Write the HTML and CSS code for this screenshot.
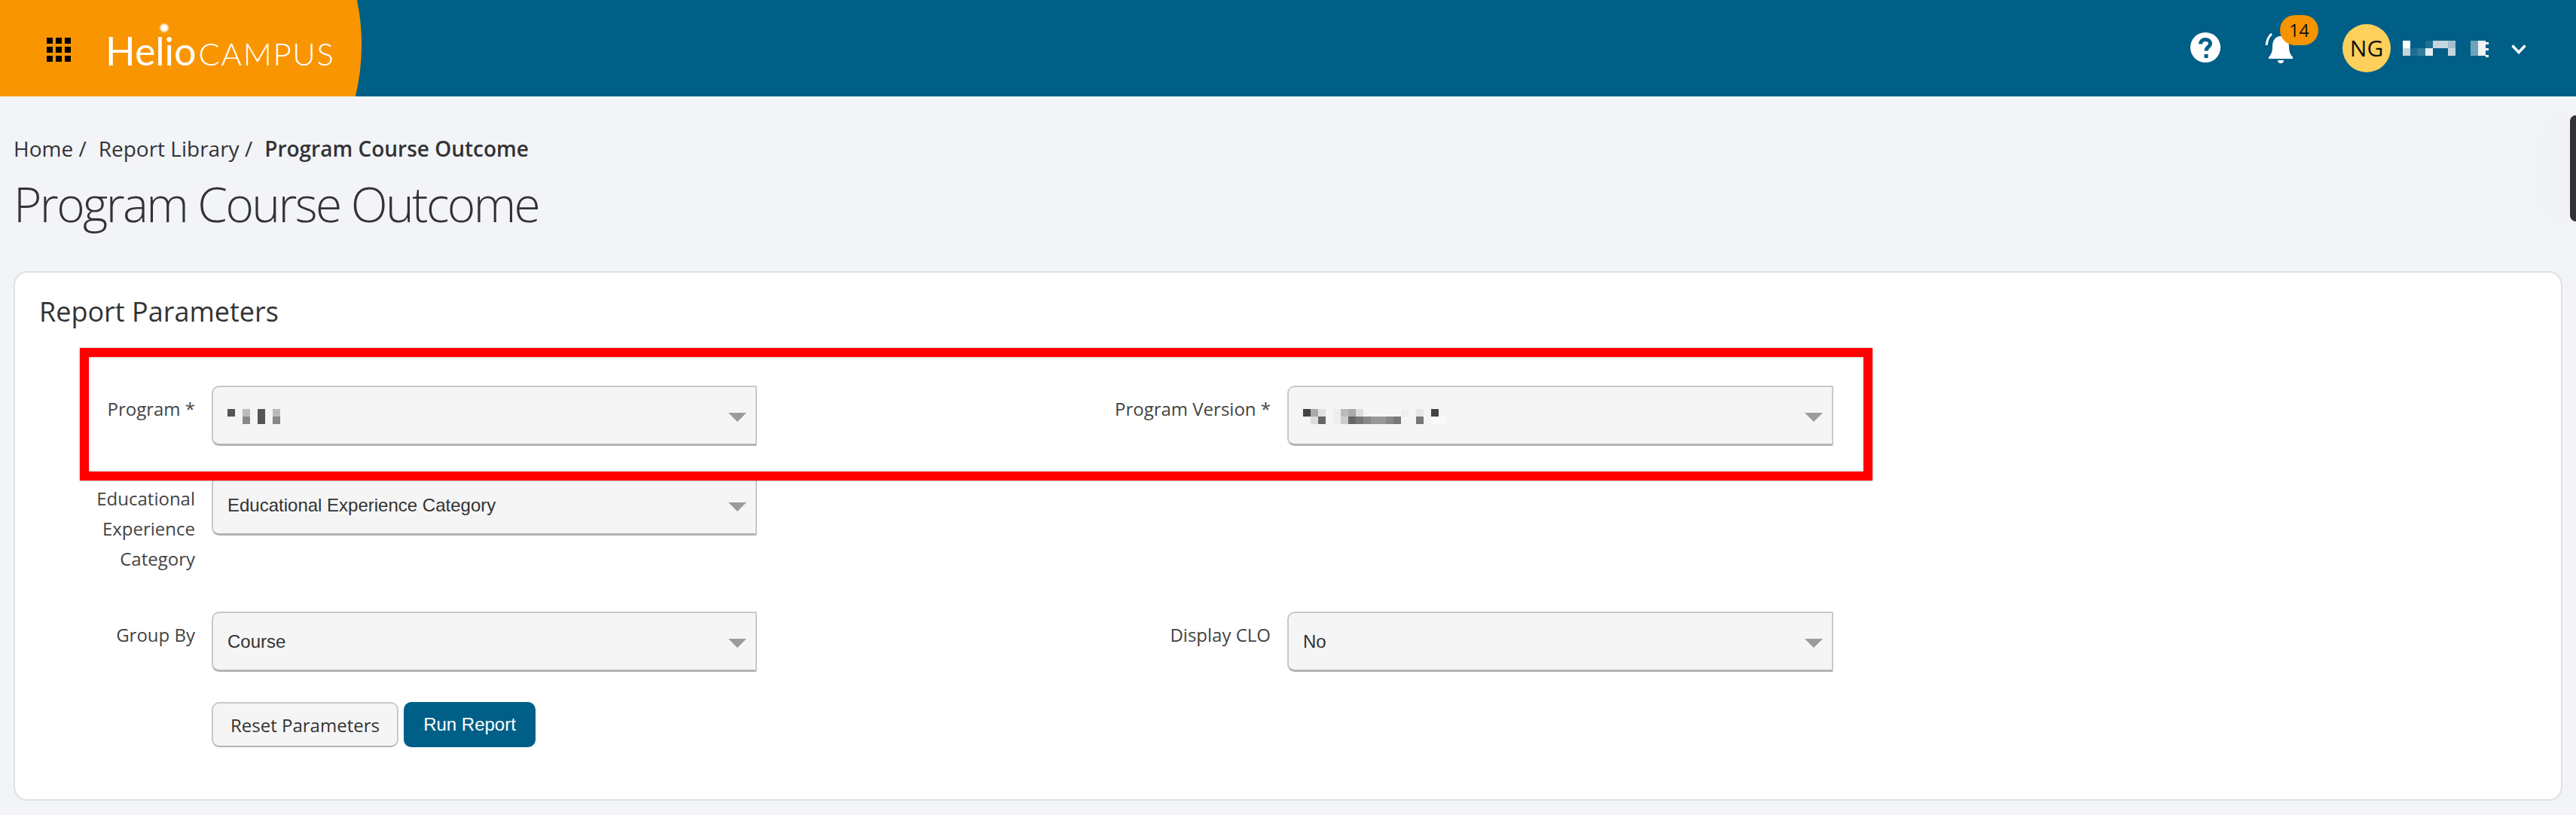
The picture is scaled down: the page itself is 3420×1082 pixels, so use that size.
FILE: index.html
```html
<!DOCTYPE html>
<html lang="en">
<head>
<meta charset="utf-8">
<title>Program Course Outcome</title>
<link rel="stylesheet" href="styles.css">
</head>
<body>
<header class="topbar">
  <div class="brand">
    <svg class="apps" width="32" height="32" viewBox="0 0 32 32" fill="#000"><rect x="0" y="0" width="8" height="8"/><rect x="12" y="0" width="8" height="8"/><rect x="24" y="0" width="8" height="8"/><rect x="0" y="12" width="8" height="8"/><rect x="12" y="12" width="8" height="8"/><rect x="24" y="12" width="8" height="8"/><rect x="0" y="24" width="8" height="8"/><rect x="12" y="24" width="8" height="8"/><rect x="24" y="24" width="8" height="8"/></svg>
    <div class="logo"><span class="logo-helio">Helio</span><span class="logo-campus">CAMPUS</span><i class="logo-star"></i></div>
  </div>
  <div class="tools">
    <svg class="help" width="40" height="40" viewBox="0 0 40 40"><circle cx="20" cy="20" r="20" fill="#fff"/><path d="M13.5 15.5C13.5 11.5 16.5 9.5 20 9.5C23.5 9.5 26.5 11.5 26.5 15C26.5 19 21 19.5 21 24.5" fill="none" stroke="#005f87" stroke-width="5"/><rect x="18.5" y="29" width="5" height="5" fill="#005f87"/></svg>
    <div class="bell-wrap">
      <svg class="bell" width="44" height="44" viewBox="0 0 44 44"><path d="M22 6C14 6 11 13 11 20C11 27 9 31 6 34V36H38V34C35 31 33 27 33 20C33 13 30 6 22 6Z" fill="#fff"/><path d="M18 38H26C26 41 24 42 22 42C20 42 18 41 18 38Z" fill="#fff"/><path d="M10 3C6 6 4 10 3 18M34 3C38 6 40 10 41 18" fill="none" stroke="#fff" stroke-width="3"/></svg>
      <span class="badge">14</span>
    </div>
    <div class="avatar">NG</div>
    <svg class="name-pixels" width="116" height="24" viewBox="0 0 116 24" shape-rendering="crispEdges">
      <rect x="0" y="0" width="10" height="10" fill="#fff"/><rect x="0" y="10" width="10" height="10" fill="#c5d5df"/>
      <rect x="10" y="10" width="10" height="10" fill="#1d6f93"/><rect x="20" y="10" width="10" height="10" fill="#327d9e"/>
      <rect x="30" y="0" width="10" height="10" fill="#1d6f93"/><rect x="30" y="10" width="10" height="10" fill="#e4ecf1"/>
      <rect x="40" y="0" width="20" height="10" fill="#c5d5df"/>
      <rect x="60" y="0" width="10" height="10" fill="#a3bfcf"/><rect x="60" y="10" width="10" height="10" fill="#c5d5df"/>
      <rect x="90" y="0" width="10" height="20" fill="#6fa3ba"/><rect x="100" y="0" width="10" height="20" fill="#eef3f6"/>
      <rect x="110" y="2" width="4" height="3" fill="#fff"/><rect x="110" y="10" width="4" height="3" fill="#fff"/><rect x="110" y="19" width="4" height="3" fill="#fff"/>
    </svg>
    <svg class="chevron" width="20" height="13" viewBox="0 0 20 13"><path d="M1.5 1.5L10 10.5L18.5 1.5" fill="none" stroke="#fff" stroke-width="3.5"/></svg>
  </div>
</header>

<main class="page">
  <nav class="crumbs">
    <span>Home /</span>
    <span>Report Library /</span>
    <strong>Program Course Outcome</strong>
  </nav>
  <h1 class="title">Program Course Outcome</h1>

  <section class="card">
    <h2 class="card-title">Report Parameters</h2>
    <form class="form">
      <label class="label">Program *</label>
      <div class="select">
        <svg class="value-pixels" width="70" height="20" viewBox="0 0 70 20" shape-rendering="crispEdges">
          <rect x="0" y="0" width="10" height="10" fill="#555"/>
          <rect x="20" y="0" width="10" height="10" fill="#bbb"/><rect x="20" y="10" width="10" height="10" fill="#888"/>
          <rect x="40" y="0" width="10" height="20" fill="#555"/>
          <rect x="60" y="0" width="10" height="10" fill="#bbb"/><rect x="60" y="10" width="10" height="10" fill="#888"/>
        </svg>
        <i class="arrow"></i>
      </div>
      <label class="label">Program Version *</label>
      <div class="select">
        <svg class="value-pixels" width="200" height="20" viewBox="0 0 200 20" shape-rendering="crispEdges">
          <rect x="0" y="0" width="10" height="10" fill="#444"/><rect x="10" y="0" width="10" height="10" fill="#aaa"/><rect x="20" y="0" width="10" height="10" fill="#e0e0e0"/>
          <rect x="40" y="0" width="10" height="10" fill="#eee"/><rect x="50" y="0" width="10" height="10" fill="#bbb"/><rect x="60" y="0" width="10" height="10" fill="#aaa"/><rect x="70" y="0" width="10" height="10" fill="#ddd"/>
          <rect x="130" y="0" width="10" height="10" fill="#eee"/><rect x="150" y="0" width="10" height="10" fill="#e5e5e5"/><rect x="170" y="0" width="10" height="10" fill="#444"/>
          <rect x="10" y="10" width="10" height="10" fill="#ddd"/><rect x="20" y="10" width="10" height="10" fill="#666"/>
          <rect x="40" y="10" width="10" height="10" fill="#eee"/><rect x="50" y="10" width="10" height="10" fill="#ccc"/><rect x="60" y="10" width="10" height="10" fill="#666"/><rect x="70" y="10" width="10" height="10" fill="#777"/><rect x="80" y="10" width="10" height="10" fill="#888"/><rect x="90" y="10" width="20" height="10" fill="#999"/><rect x="110" y="10" width="10" height="10" fill="#888"/><rect x="120" y="10" width="10" height="10" fill="#777"/>
          <rect x="150" y="10" width="10" height="10" fill="#777"/><rect x="170" y="10" width="20" height="10" fill="#fafafa"/>
        </svg>
        <i class="arrow"></i>
      </div>

      <label class="label">Educational Experience Category</label>
      <div class="select select-top"><span>Educational Experience Category</span><i class="arrow"></i></div>
      <div class="filler"></div>

      <label class="label">Group By</label>
      <div class="select"><span>Course</span><i class="arrow"></i></div>
      <label class="label">Display CLO</label>
      <div class="select"><span>No</span><i class="arrow"></i></div>

      <div class="actions">
        <button type="button" class="btn btn-reset">Reset Parameters</button>
        <button type="button" class="btn btn-run">Run Report</button>
      </div>
    </form>
    <div class="highlight"></div>
  </section>
</main>
<div class="side-tab"></div>
</body>
</html>
```

FILE: styles.css
```css
* { box-sizing: border-box; }
html, body { margin: 0; height: 100%; }
body {
  background: #f2f4f8;
  color: #333;
  font-family: "Open Sans", sans-serif;
  overflow: hidden;
  position: relative;
}

/* top bar */
.topbar {
  height: 128px;
  background: #005f87;
  display: flex;
  justify-content: space-between;
  align-items: center;
}
.brand {
  width: 490px;
  height: 128px;
  background: #f99500;
  clip-path: path("M0 0H474Q487 64 472 128H0Z");
  display: flex;
  align-items: center;
  padding-left: 62px;
  gap: 46px;
}
.apps { flex: none; margin-top: 4px; }
.logo {
  position: relative;
  display: flex;
  align-items: baseline;
  color: #fff;
  font-family: Lato, sans-serif;
  line-height: 1;
  margin-top: 5px;
}
.logo-helio { font-size: 52px; font-weight: 400; letter-spacing: 0; }
.logo-campus { font-size: 42px; font-weight: 300; margin-left: 3px; letter-spacing: 1.6px; }
.logo-star {
  position: absolute;
  left: 71px;
  top: -11px;
  width: 14px;
  height: 14px;
  border-radius: 50%;
  background: radial-gradient(circle, #fff 0 35%, rgba(255,255,255,.45) 55%, rgba(255,255,255,0) 72%);
}
.tools {
  display: flex;
  align-items: center;
  padding-right: 66px;
}
.help { margin-top: -2px; }
.bell-wrap { position: relative; margin-left: 58px; width: 44px; height: 44px; }
.badge {
  position: absolute;
  left: 21px;
  top: -22px;
  width: 51px;
  height: 40px;
  border-radius: 20px;
  background: #f59300;
  color: #111;
  font-size: 23px;
  line-height: 40px;
  text-align: center;
}
.avatar {
  width: 64px;
  height: 64px;
  border-radius: 50%;
  background: #ffd05b;
  color: #111;
  font-size: 30px;
  line-height: 64px;
  text-align: center;
  margin-left: 60px;
}
.name-pixels { margin-left: 16px; margin-top: 4px; }
.chevron { margin-left: 28px; margin-top: 2px; }

/* page */
.page { padding: 49px 18px 0; }
.crumbs {
  display: flex;
  gap: 16px;
  font-size: 28px;
  line-height: 40px;
  color: #333;
}
.crumbs strong { font-weight: 600; }
.title {
  margin: 14px 0 0;
  font-size: 64px;
  line-height: 80px;
  font-weight: 300;
  color: #333;
  letter-spacing: -2.6px;
}
.card {
  position: relative;
  margin-top: 49px;
  height: 703px;
  background: #fff;
  border: 2px solid #dfe0e2;
  border-radius: 18px;
  padding: 27px 0 0 32px;
}
.card-title {
  margin: 0;
  font-size: 36px;
  line-height: 50px;
  font-weight: 400;
  color: #333;
}
.form {
  margin: 73px 0 0 8px;
  display: grid;
  grid-template-columns: 199px 724px 660px 725px;
  column-gap: 22px;
  row-gap: 39px;
}
.label {
  font-size: 24px;
  line-height: 40px;
  padding: 11px 0;
  text-align: right;
  color: #444;
}
.select {
  height: 80px;
  background: #f5f5f5;
  border: 2px solid #c8c8c8;
  border-bottom: 3px solid #b3b3b3;
  border-radius: 10px 2px 2px 10px;
  display: flex;
  align-items: center;
  justify-content: space-between;
  padding: 0 12px 0 19px;
  font-family: "Liberation Sans", Arial, sans-serif;
  font-size: 24px;
  color: #333;
}
.value-pixels { margin-top: 3px; }
.arrow {
  flex: none;
  width: 0;
  height: 0;
  margin-top: 4px;
  border-left: 12px solid transparent;
  border-right: 12px solid transparent;
  border-top: 12px solid #9b9b9b;
}
.filler { grid-column: 3 / 5; }
.actions {
  grid-column: 2 / 5;
  display: flex;
  gap: 7px;
  margin-top: 1px;
}
.btn {
  height: 60px;
  border-radius: 10px;
  font-size: 24px;
  padding: 0;
}
.btn-reset {
  width: 248px;
  background: #f5f5f5;
  border: 2px solid #c8c8c8;
  border-bottom-color: #b3b3b3;
  color: #333;
  font-family: "Open Sans", sans-serif;
}
.btn-run {
  width: 175px;
  background: #005f87;
  border: 0;
  color: #fff;
  font-family: "Liberation Sans", Arial, sans-serif;
}

/* annotation drawn over the form */
.highlight {
  position: absolute;
  left: 86px;
  top: 100px;
  width: 2380px;
  height: 176px;
  border: 12px solid #f00;
  box-shadow: 0 0 3px rgba(0,0,0,.3), inset 0 0 3px rgba(0,0,0,.25);
}
.side-tab {
  position: absolute;
  right: 0;
  top: 153px;
  width: 8px;
  height: 141px;
  background: #333;
  border-radius: 20px 0 0 20px;
  box-shadow: 0 0 90px rgba(0,0,0,.12);
}
```
